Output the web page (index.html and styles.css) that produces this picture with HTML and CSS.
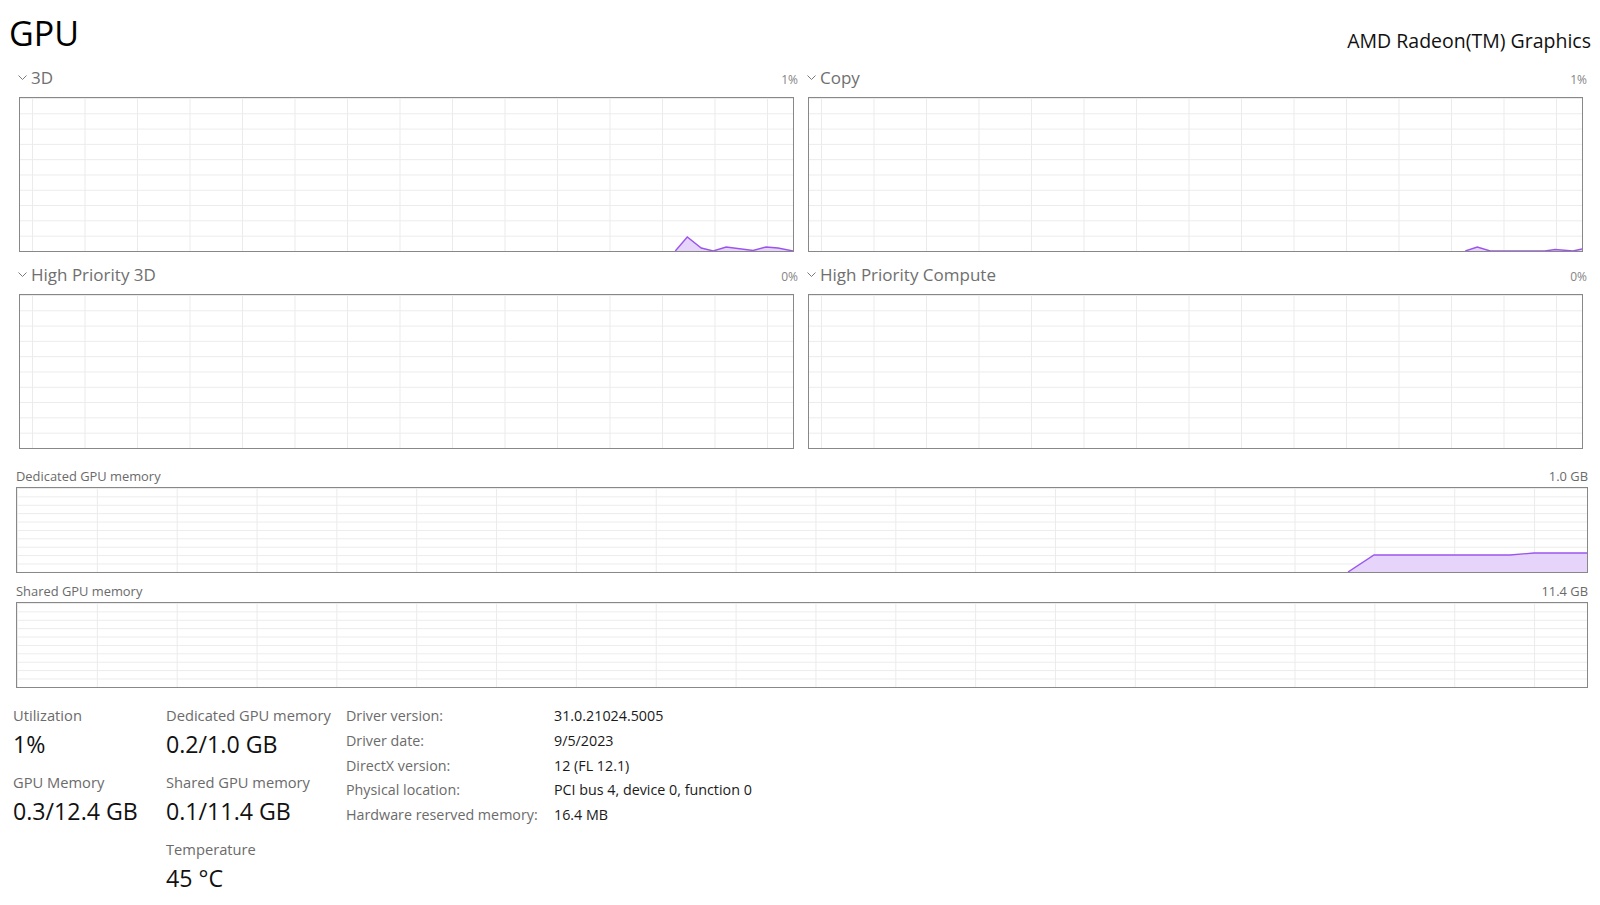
FILE: index.html
```html
<!DOCTYPE html>
<html lang="en">
<head>
    <meta charset="UTF-8">
    <meta name="viewport" content="width=device-width, initial-scale=1.0">
    <title>GPU</title>
    <link rel="stylesheet" href="styles.css">
</head>
<body>
    <header class="top">
        <h1 class="title">GPU</h1>
        <div class="device">AMD Radeon(TM) Graphics</div>
    </header>

    <section class="engines">
        <div class="engine">
            <div class="engine-head">
                <span class="engine-name"><svg class="chevron" viewBox="0 0 9 6"><polyline points="0.5,0.5 4.5,4.5 8.5,0.5"/></svg>3D</span>
                <span class="engine-pct">1%</span>
            </div>
            <div class="graph">
                <svg viewBox="0 0 775 153" preserveAspectRatio="none">
                    <polygon class="area" points="657,153 669,139 683,150 695,153 708,149 735,152.5 748,149 760,150 775,153"/>
                    <polyline class="line" points="657,153 669,139 683,150 695,153 708,149 735,152.5 748,149 760,150 775,153"/>
                </svg>
            </div>
        </div>
        <div class="engine">
            <div class="engine-head">
                <span class="engine-name"><svg class="chevron" viewBox="0 0 9 6"><polyline points="0.5,0.5 4.5,4.5 8.5,0.5"/></svg>Copy</span>
                <span class="engine-pct">1%</span>
            </div>
            <div class="graph">
                <svg viewBox="0 0 775 153" preserveAspectRatio="none">
                    <polygon class="area" points="658,153 670,149 683,153 738,153 748,151.5 760,152.5 766,153 775,151 775,153"/>
                    <polyline class="line" points="658,153 670,149 683,153 738,153 748,151.5 760,152.5 766,153 775,151"/>
                </svg>
            </div>
        </div>
        <div class="engine">
            <div class="engine-head">
                <span class="engine-name"><svg class="chevron" viewBox="0 0 9 6"><polyline points="0.5,0.5 4.5,4.5 8.5,0.5"/></svg>High Priority 3D</span>
                <span class="engine-pct">0%</span>
            </div>
            <div class="graph"></div>
        </div>
        <div class="engine">
            <div class="engine-head">
                <span class="engine-name"><svg class="chevron" viewBox="0 0 9 6"><polyline points="0.5,0.5 4.5,4.5 8.5,0.5"/></svg>High Priority Compute</span>
                <span class="engine-pct">0%</span>
            </div>
            <div class="graph"></div>
        </div>
    </section>

    <section class="memory">
        <div class="mem-head">
            <span>Dedicated GPU memory</span>
            <span>1.0 GB</span>
        </div>
        <div class="graph graph-mem">
            <svg viewBox="0 0 1570 84" preserveAspectRatio="none">
                <polygon class="area" points="1331,84 1357,67 1493,67 1517,65 1570,65 1570,84"/>
                <polyline class="line" points="1331,84 1357,67 1493,67 1517,65 1570,65"/>
            </svg>
        </div>
        <div class="mem-head">
            <span>Shared GPU memory</span>
            <span>11.4 GB</span>
        </div>
        <div class="graph graph-mem"></div>
    </section>

    <section class="stats">
        <div class="stat-col stat-col-first">
            <div class="stat">
                <div class="stat-label">Utilization</div>
                <div class="stat-value">1%</div>
            </div>
            <div class="stat">
                <div class="stat-label">GPU Memory</div>
                <div class="stat-value">0.3/12.4 GB</div>
            </div>
        </div>
        <div class="stat-col stat-col-second">
            <div class="stat">
                <div class="stat-label">Dedicated GPU memory</div>
                <div class="stat-value">0.2/1.0 GB</div>
            </div>
            <div class="stat">
                <div class="stat-label">Shared GPU memory</div>
                <div class="stat-value">0.1/11.4 GB</div>
            </div>
            <div class="stat">
                <div class="stat-label">Temperature</div>
                <div class="stat-value">45 °C</div>
            </div>
        </div>
        <dl class="info">
            <dt>Driver version:</dt><dd>31.0.21024.5005</dd>
            <dt>Driver date:</dt><dd>9/5/2023</dd>
            <dt>DirectX version:</dt><dd>12 (FL 12.1)</dd>
            <dt>Physical location:</dt><dd>PCI bus 4, device 0, function 0</dd>
            <dt>Hardware reserved memory:</dt><dd>16.4 MB</dd>
        </dl>
    </section>
</body>
</html>
```

FILE: styles.css
```css
body {
    margin: 0;
    background-color: #fff;
    font-family: "Open Sans", "Noto Sans", sans-serif;
    color: #1a1a1a;
}

/* page title */
.top {
    display: flex;
    justify-content: space-between;
    align-items: flex-start;
    padding: 11px 9px 0 9px;
    margin-bottom: 11px;
}
.title {
    margin: 0;
    font-size: 34px;
    font-weight: 400;
    line-height: 44px;
    color: #000;
}
.device {
    margin-top: 17px;
    font-size: 19.5px;
    line-height: 26px;
    color: #111;
}

/* engine graphs */
.engines {
    display: grid;
    grid-template-columns: 1fr 1fr;
    column-gap: 9px;
    row-gap: 11px;
    padding: 0 13px 0 18px;
}
.engine-head {
    display: flex;
    justify-content: space-between;
    align-items: baseline;
    height: 24px;
    line-height: 24px;
    margin-bottom: 7px;
}
.engine-name {
    font-size: 17px;
    color: #6f6f6f;
}
.chevron {
    width: 9px;
    height: 6px;
    margin-right: 4px;
    vertical-align: 3px;
    fill: none;
    stroke: #7a7a7a;
    stroke-width: 1;
}
.engine-pct {
    font-size: 12px;
    color: #858585;
}

.graph {
    box-sizing: border-box;
    height: 155px;
    margin: 0 4px 0 1px;
    border: 1px solid #888;
    background-color: #fff;
    background-image:
        linear-gradient(to right, #ebebeb 1px, transparent 1px),
        linear-gradient(to bottom, #ebebeb 1px, transparent 1px);
    background-size: 52.5px 100%, 100% 10%;
    background-position: 12px 0, 0 0;
}
.graph svg {
    display: block;
    width: 100%;
    height: 100%;
}
.area {
    fill: #e6d4fb;
}
.line {
    fill: none;
    stroke: #9b55ee;
    stroke-width: 1.4;
    vector-effect: non-scaling-stroke;
}

/* memory graphs */
.memory {
    margin-top: 18px;
    padding: 0 12px 0 16px;
}
.mem-head {
    display: flex;
    justify-content: space-between;
    font-size: 12.9px;
    line-height: 18px;
    color: #6a6a6a;
    margin-bottom: 2px;
}
.graph + .mem-head {
    margin-top: 9px;
}
.graph-mem {
    height: 86px;
    margin: 0;
    background-size: 79.85px 100%, 100% 10%;
    background-position: 0 0, 0 0;
}

/* numbers below the graphs */
.stats {
    display: flex;
    align-items: flex-start;
    margin-top: 17px;
    padding-left: 13px;
}
.stat-col-first {
    width: 153px;
}
.stat-col-second {
    width: 180px;
}
.stat {
    margin-bottom: 13px;
}
.stat-label {
    font-size: 14.7px;
    line-height: 20px;
    color: #6b6b6b;
}
.stat-value {
    margin-top: 4px;
    font-size: 23.2px;
    line-height: 30px;
    color: #111;
}

.info {
    display: grid;
    grid-template-columns: 208px auto;
    row-gap: 4.75px;
    margin: 1px 0 0;
    font-size: 14.3px;
    line-height: 20px;
}
.info dt {
    color: #6b6b6b;
}
.info dd {
    margin: 0;
    color: #1a1a1a;
}
```
